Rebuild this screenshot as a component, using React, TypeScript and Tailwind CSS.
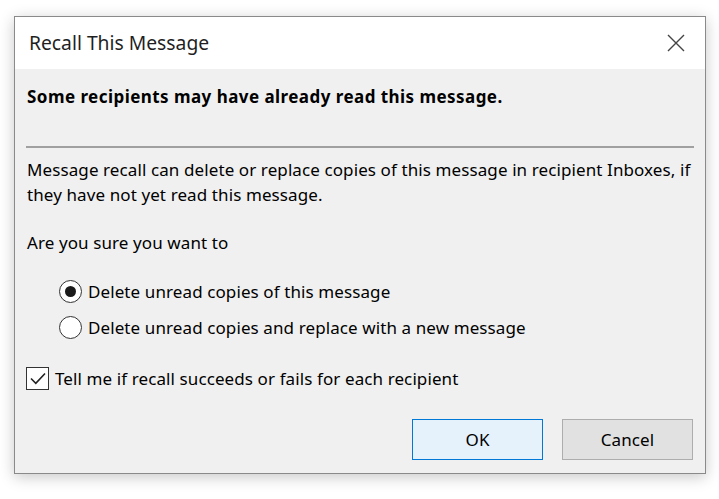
import React, { useState } from "react";

export default function App() {
  const [choice, setChoice] = useState("delete");
  const [notify, setNotify] = useState(true);

  return (
    <div className="w-[719px] h-[499px] bg-white pl-[14px] pt-[16px]" style={{ fontFamily: '"Noto Sans", "Open Sans", sans-serif' }}>
      {/* Dialog */}
      <div className="w-[692px] h-[458px] flex flex-col border border-[#8a8a8a] bg-[#f0f0f0] shadow-[0_3px_14px_rgba(0,0,0,0.22)]">
        {/* Title bar */}
        <div className="h-[52px] bg-white flex items-center justify-between pl-[14px] pr-[20px]">
          <span className="text-[19.3px] text-[#1f1f1f]">Recall This Message</span>
          <svg width="18" height="18" viewBox="0 0 18 18" className="text-[#444]">
            <path d="M1 1 L17 17 M17 1 L1 17" stroke="currentColor" strokeWidth="1.4" fill="none" />
          </svg>
        </div>

        {/* Body */}
        <div className="flex flex-col px-[11px] text-[17px] text-black leading-[25px] tracking-[0.1px]">
          <div className="pt-[15px] pl-[1px] font-bold tracking-[0.45px]">Some recipients may have already read this message.</div>
          <div className="mt-[37px] h-[2px] bg-[#a0a0a0]" />
          <p className="mt-[9px] pl-[1px]">
            Message recall can delete or replace copies of this message in recipient Inboxes, if
            <br />
            they have not yet read this message.
          </p>
          <p className="mt-[23px] pl-[1px]">Are you sure you want to</p>

          <div className="mt-[24px] pl-[33px] flex flex-col gap-[11px]">
            <label className="flex items-center gap-[6px] cursor-pointer" onClick={() => setChoice("delete")}>
              <span className="w-[23px] h-[23px] rounded-full border-[1.5px] border-[#333] bg-white flex items-center justify-center">
                {choice === "delete" && <span className="w-[11px] h-[11px] rounded-full bg-[#1a1a1a]" />}
              </span>
              <span>Delete unread copies of this message</span>
            </label>
            <label className="flex items-center gap-[6px] cursor-pointer" onClick={() => setChoice("replace")}>
              <span className="w-[23px] h-[23px] rounded-full border-[1.5px] border-[#333] bg-white flex items-center justify-center">
                {choice === "replace" && <span className="w-[11px] h-[11px] rounded-full bg-[#1a1a1a]" />}
              </span>
              <span>Delete unread copies and replace with a new message</span>
            </label>
          </div>

          <label className="mt-[26px] flex items-center gap-[6px] cursor-pointer" onClick={() => setNotify(!notify)}>
            <span className="w-[23px] h-[23px] border-[1.5px] border-[#333] bg-white flex items-center justify-center">
              {notify && (
                <svg width="16" height="13" viewBox="0 0 16 13">
                  <path d="M1 6.5 L5.8 11.3 L15 1.5" stroke="#222" strokeWidth="1.6" fill="none" />
                </svg>
              )}
            </span>
            <span>Tell me if recall succeeds or fails for each recipient</span>
          </label>

          {/* Buttons */}
          <div className="mt-[28px] flex justify-end gap-[19px] pr-[1px]">
            <button className="w-[131px] h-[41px] bg-[#e5f1fb] border border-[#0078d7] text-[17px]">OK</button>
            <button className="w-[131px] h-[41px] bg-[#e1e1e1] border border-[#adadad] text-[17px]">Cancel</button>
          </div>
        </div>
      </div>
    </div>
  );
}
